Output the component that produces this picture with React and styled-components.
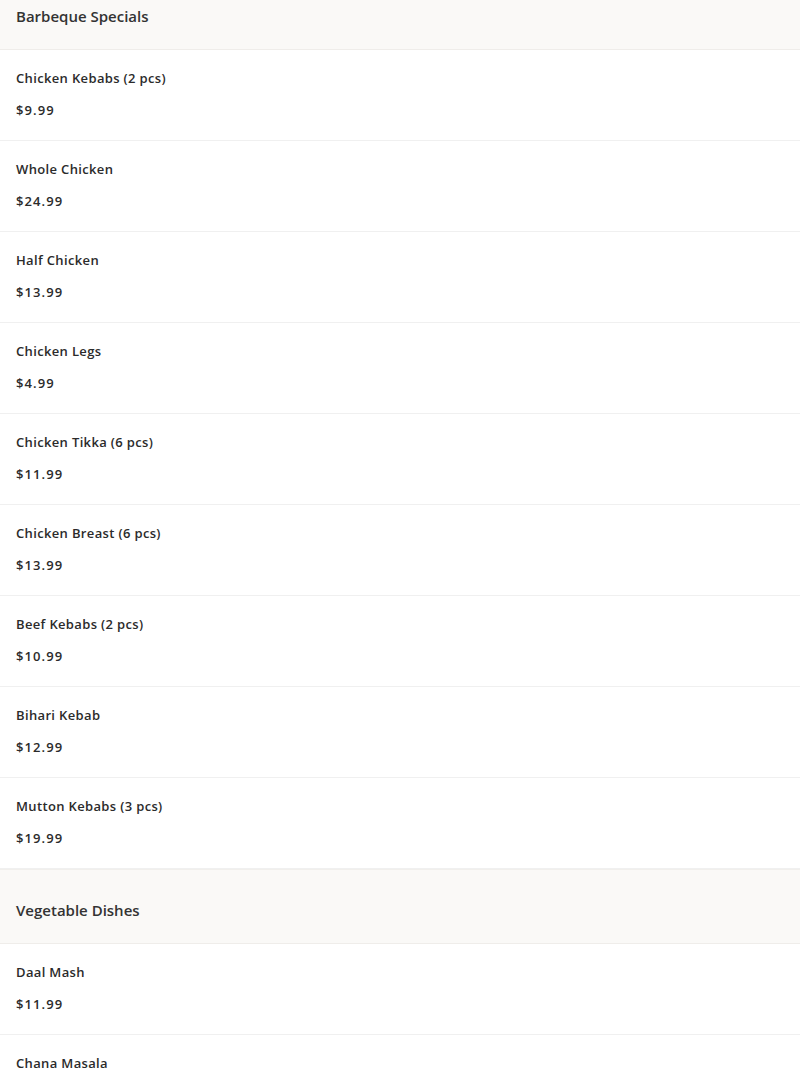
import React from "react";
import styled, { createGlobalStyle } from "styled-components";

const Global = createGlobalStyle`
  html, body { margin: 0; padding: 0; background: #fff; }
  body { font-family: "Open Sans", "Noto Sans", sans-serif; color: #2b2b2b; -webkit-font-smoothing: antialiased; }
`;

const Menu = styled.div`
  display: flex;
  flex-direction: column;
  margin-top: -25px;
`;

const SectionHeader = styled.div`
  background: #faf9f7;
  border-top: 1px solid #f1efec;
  border-bottom: 1px solid #efedea;
  padding: 31px 16px 24px;
  font-size: 15px;
  line-height: 18px;
  font-weight: 600;
  color: #333;
`;

const Item = styled.div`
  display: flex;
  flex-direction: column;
  gap: 16px;
  padding: 20px 16px 22px;
  border-bottom: 1px solid #f0f0f0;
`;

const Name = styled.div`
  font-size: 13px;
  line-height: 16px;
  font-weight: 600;
  letter-spacing: 0.35px;
  color: #2b2b2b;
`;

const Price = styled.div`
  font-size: 13px;
  line-height: 16px;
  font-weight: 600;
  letter-spacing: 1.1px;
  color: #2b2b2b;
`;

const sections = [
  {
    title: "Barbeque Specials",
    items: [
      ["Chicken Kebabs (2 pcs)", "$9.99"],
      ["Whole Chicken", "$24.99"],
      ["Half Chicken", "$13.99"],
      ["Chicken Legs", "$4.99"],
      ["Chicken Tikka (6 pcs)", "$11.99"],
      ["Chicken Breast (6 pcs)", "$13.99"],
      ["Beef Kebabs (2 pcs)", "$10.99"],
      ["Bihari Kebab", "$12.99"],
      ["Mutton Kebabs (3 pcs)", "$19.99"],
    ],
  },
  {
    title: "Vegetable Dishes",
    items: [
      ["Daal Mash", "$11.99"],
      ["Chana Masala", "$11.99"],
    ],
  },
];

export default function App() {
  return (
    <>
      <Global />
      <Menu>
        {sections.map((s) => (
          <React.Fragment key={s.title}>
            <SectionHeader>{s.title}</SectionHeader>
            {s.items.map(([n, p]) => (
              <Item key={n}>
                <Name>{n}</Name>
                <Price>{p}</Price>
              </Item>
            ))}
          </React.Fragment>
        ))}
      </Menu>
    </>
  );
}
